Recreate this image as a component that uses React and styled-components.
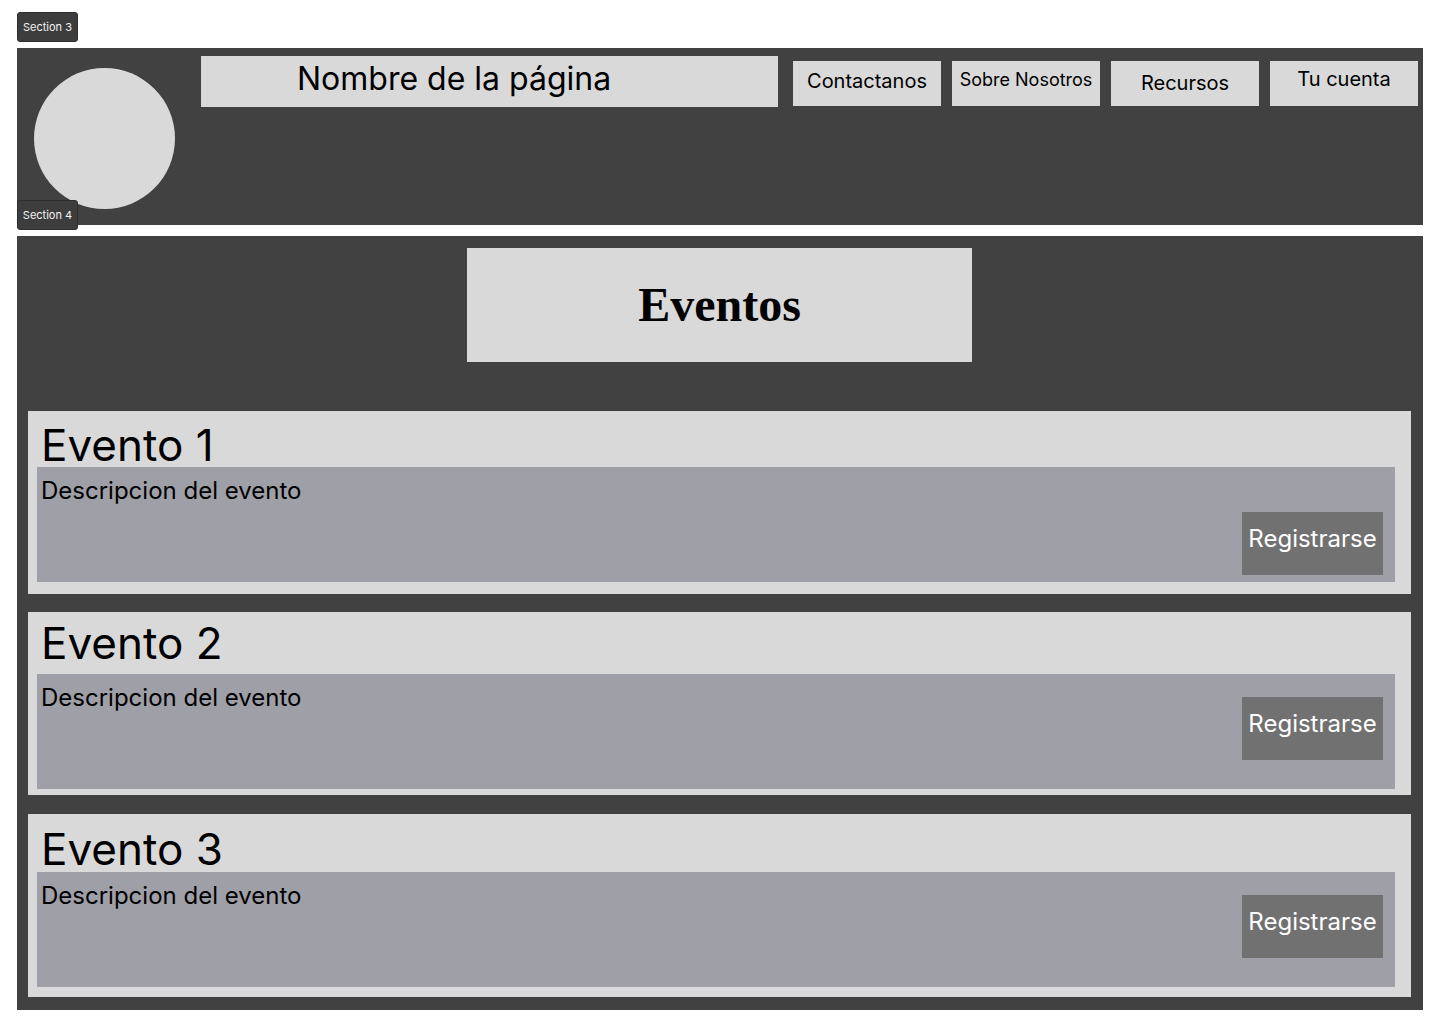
import React from 'react';
import styled, { createGlobalStyle } from 'styled-components';

const GlobalStyle = createGlobalStyle`
  body {
    margin: 0;
    background: #ffffff;
    font-family: Inter, "Noto Sans", sans-serif;
  }
`;

const navItems = [
  { label: 'Contactanos', size: 20, top: 8 },
  { label: 'Sobre Nosotros', size: 18, top: 8 },
  { label: 'Recursos', size: 20, top: 10 },
  { label: 'Tu cuenta', size: 20, top: 6 },
];

const events = [
  { title: 'Evento 1', head: 56, pad: 12, bottom: 12, btnTop: 45, gap: 0 },
  { title: 'Evento 2', head: 62, pad: 9, bottom: 6, btnTop: 23, gap: 18 },
  { title: 'Evento 3', head: 58, pad: 13, bottom: 10, btnTop: 23, gap: 19 },
];

const App = () => {
  return (
    <Page>
      <GlobalStyle />
      <Section>
        <Badge>Section 3</Badge>
        <Header>
          <Logo />
          <SiteTitle>Nombre de la página</SiteTitle>
          <Nav>
            {navItems.map((item) => (
              <NavButton key={item.label} $size={item.size} $top={item.top}>
                {item.label}
              </NavButton>
            ))}
          </Nav>
        </Header>
      </Section>

      <Section>
        <Badge>Section 4</Badge>
        <EventsFrame>
          <EventsHeading>Eventos</EventsHeading>
          <EventList>
            {events.map((ev) => (
              <EventCard key={ev.title} $bottom={ev.bottom} $gap={ev.gap}>
                <EventTitle $head={ev.head} $pad={ev.pad}>{ev.title}</EventTitle>
                <EventBody>
                  <EventDescription>Descripcion del evento</EventDescription>
                  <RegisterButton $top={ev.btnTop}>Registrarse</RegisterButton>
                </EventBody>
              </EventCard>
            ))}
          </EventList>
        </EventsFrame>
      </Section>
    </Page>
  );
};

const Page = styled.div`
  width: 1406px;
  padding: 48px 0 14px 17px;
  display: flex;
  flex-direction: column;
  gap: 11px;
`;

const Section = styled.section`
  position: relative;
`;

const Badge = styled.div`
  position: absolute;
  top: -36px;
  left: 0;
  z-index: 2;
  width: 61px;
  height: 30px;
  box-sizing: border-box;
  display: flex;
  align-items: center;
  justify-content: center;
  background: #3d3d3d;
  border: 1px solid #2e2e2e;
  border-radius: 3px;
  color: #f2f2f2;
  font-size: 11px;
  font-family: Inter, sans-serif;
`;

const Header = styled.header`
  height: 177px;
  box-sizing: border-box;
  background: #414141;
  display: flex;
  align-items: flex-start;
  padding: 8px 5px 0 17px;
`;

const Logo = styled.div`
  width: 141px;
  height: 141px;
  margin-top: 12px;
  border-radius: 50%;
  background: #d9d9d9;
  flex-shrink: 0;
`;

const SiteTitle = styled.div`
  width: 577px;
  height: 51px;
  margin-left: 26px;
  box-sizing: border-box;
  padding: 3px 0 0 96px;
  background: #d9d9d9;
  color: #000;
  font-size: 32px;
  line-height: 40px;
  white-space: nowrap;
`;

const Nav = styled.nav`
  display: flex;
  gap: 11px;
  margin-left: 15px;
  margin-top: 5px;
`;

const NavButton = styled.div`
  width: 148px;
  height: 45px;
  box-sizing: border-box;
  padding-top: ${(p) => p.$top}px;
  background: #d9d9d9;
  color: #000;
  font-size: ${(p) => p.$size}px;
  text-align: center;
  white-space: nowrap;
`;

const EventsFrame = styled.main`
  background: #414141;
  padding: 12px 12px 13px 11px;
  display: flex;
  flex-direction: column;
  align-items: center;
`;

const EventsHeading = styled.h1`
  width: 505px;
  height: 114px;
  margin: 0 0 49px;
  display: flex;
  align-items: center;
  justify-content: center;
  background: #d9d9d9;
  color: #000;
  font-family: "Liberation Serif", "Times New Roman", serif;
  font-weight: 700;
  font-size: 48px;
  padding-bottom: 2px;
  box-sizing: border-box;
`;

const EventList = styled.div`
  align-self: stretch;
  display: flex;
  flex-direction: column;
`;

const EventCard = styled.article`
  margin-top: ${(p) => p.$gap}px;
  background: #d9d9d9;
  padding: 0 16px ${(p) => p.$bottom}px 9px;
  display: flex;
  flex-direction: column;
`;

const EventTitle = styled.h2`
  height: ${(p) => p.$head}px;
  margin: 0;
  padding: ${(p) => p.$pad}px 0 0 4px;
  box-sizing: border-box;
  color: #000;
  font-size: 44px;
  font-weight: 400;
  line-height: 1;
  white-space: nowrap;
`;

const EventBody = styled.div`
  height: 115px;
  background: #9f9fa7;
  display: flex;
  justify-content: space-between;
  align-items: flex-start;
  padding: 0 12px 0 4px;
`;

const EventDescription = styled.p`
  margin: 9px 0 0;
  color: #000;
  font-size: 24px;
`;

const RegisterButton = styled.button`
  width: 141px;
  height: 63px;
  margin-top: ${(p) => p.$top}px;
  border: none;
  padding: 0 0 10px;
  background: #717171;
  color: #ffffff;
  font-family: Inter, sans-serif;
  font-size: 24px;
  cursor: pointer;
`;

export default App;
